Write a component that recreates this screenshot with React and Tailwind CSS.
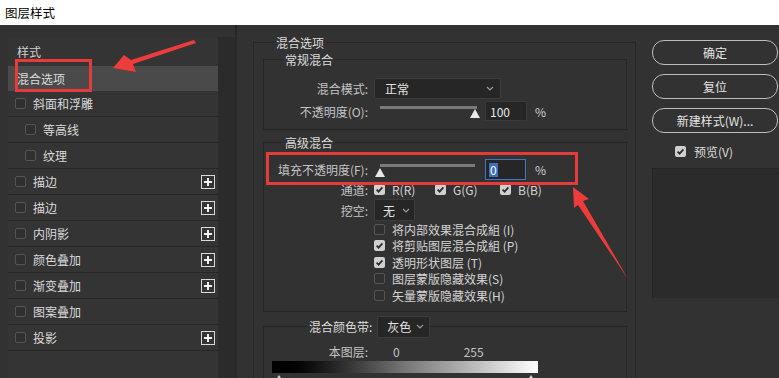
import React from "react";

const Check = ({ on }) =>
  on ? (
    <span className="flex h-[11px] w-[11px] shrink-0 items-center justify-center rounded-[2px] bg-[#d0d0d0]">
      <svg width="9" height="9" viewBox="0 0 9 9">
        <path d="M1.6 4.6l2 2 3.8-4.2" fill="none" stroke="#2e2e2e" strokeWidth="1.8" />
      </svg>
    </span>
  ) : (
    <span className="h-[11px] w-[11px] shrink-0 rounded-[2px] border border-[#545454] bg-[#303030]" />
  );

const Plus = () => (
  <span className="flex h-[14px] w-[14px] items-center justify-center border border-[#d8d8d8]">
    <svg width="10" height="10" viewBox="0 0 10 10">
      <path d="M5 1v8M1 5h8" stroke="#efefef" strokeWidth="2" />
    </svg>
  </span>
);

const Chevron = () => (
  <svg width="8" height="5" viewBox="0 0 8 5">
    <path d="M1 1l3 3 3-3" fill="none" stroke="#9a9a9a" strokeWidth="1.2" />
  </svg>
);

const layers = [
  ["斜面和浮雕", false, false],
  ["等高线", true, false],
  ["纹理", true, false],
  ["描边", false, true],
  ["描边", false, true],
  ["内阴影", false, true],
  ["颜色叠加", false, true],
  ["渐变叠加", false, true],
  ["图案叠加", false, false],
  ["投影", false, true],
];

const options = [
  ["将内部效果混合成組 (I)", false],
  ["将剪贴图层混合成組 (P)", true],
  ["透明形状图层 (T)", true],
  ["图层蒙版隐藏效果(S)", false],
  ["矢量蒙版隐藏效果(H)", false],
];

export default function App() {
  return (
    <div className="relative h-[378px] w-[779px] overflow-hidden bg-[#323232] font-['Noto_Sans_CJK_SC',sans-serif] text-[12px] leading-[17px] text-[#d4d4d4]">
      <div className="flex h-[25px] items-center bg-white pl-[5px] text-[12.5px] text-black">图层样式</div>

      <div className="flex h-[353px]">
        {/* effects list */}
        <div className="w-[237px] shrink-0 border-r-2 border-[#282828] pl-[8px] pt-[12px]">
          <div className="flex h-full">
            <div className="w-[210px] bg-[#343434]">
              <div className="flex h-[29px] items-center pl-[9px] text-[#cfcfcf]">样式</div>
              <div className="flex h-[25px] items-center bg-[#4a4a4a] pl-[9px] text-[#dcdcdc]">混合选项</div>
              {layers.map(([t, indent, plus], i) => (
                <div
                  key={i}
                  className={`flex h-[26px] items-center border-b border-[#272727] pr-[3px] ${indent ? "pl-[17px]" : "pl-[7px]"}`}
                >
                  <Check />
                  <span className="ml-[7px] flex-1 text-[#dadada]">{t}</span>
                  {plus && <Plus />}
                </div>
              ))}
            </div>
            <div className="w-[17px] bg-[#2b2b2b]" />
          </div>
        </div>

        {/* blending options */}
        <div className="w-[399px] shrink-0">
          <fieldset className="ml-[16px] mt-[9px] h-[400px] w-[383px] border border-[#262626]">
            <legend className="ml-[20px] px-[2px] text-[#dcdcdc]">混合选项</legend>

            <fieldset className="ml-[9px] w-[364px] border border-[#262626] pb-[8px]">
              <legend className="ml-[19px] px-[2px] text-[#dcdcdc]">常规混合</legend>
              <div className="mt-[10px] flex h-[21px] items-center">
                <span className="w-[104px] text-right text-[#c4c4c4]">混合模式:</span>
                <div className="ml-[6px] flex h-[21px] w-[127px] items-center justify-between rounded-[2px] border border-[#3c3c3c] bg-[#262626] pl-[10px] pr-[6px] text-[#e2e2e2]">
                  正常
                  <Chevron />
                </div>
              </div>
              <div className="mt-[2px] flex h-[20px] items-center">
                <span className="w-[104px] text-right text-[#c4c4c4]">不透明度(O):</span>
                <div className="relative ml-[6px] h-full w-[111px]">
                  <div className="absolute left-[6px] top-[5px] h-[3px] w-[97px] bg-[#7a7a7a]" />
                  <div className="absolute left-[96px] top-[8px] h-0 w-0 border-x-[5px] border-b-[9px] border-x-transparent border-b-[#e8e8e8]" />
                </div>
                <div className="flex h-[20px] w-[42px] items-center border border-[#3a3a3a] bg-[#262626] pl-[4px] text-[#e6e6e6]">100</div>
                <span className="ml-[8px] text-[#cfcfcf]">%</span>
              </div>
            </fieldset>

            <fieldset className="ml-[9px] mt-[4px] w-[364px] border border-[#262626] pb-[7px]">
              <legend className="ml-[19px] px-[2px] text-[#dcdcdc]">高级混合</legend>
              <div className="mt-[8px] flex h-[21px] items-center">
                <span className="w-[104px] text-right text-[#c4c4c4]">填充不透明度(F):</span>
                <div className="relative ml-[6px] h-full w-[111px]">
                  <div className="absolute left-[6px] top-[5px] h-[3px] w-[95px] bg-[#7a7a7a]" />
                  <div className="absolute left-[1px] top-[9px] h-0 w-0 border-x-[5px] border-b-[9px] border-x-transparent border-b-[#e8e8e8]" />
                </div>
                <div className="flex h-[21px] w-[41px] items-center border border-[#4673bd] bg-[#262626] pl-[3px]">
                  <span className="bg-[#3a6fc6] px-[1px] leading-[14px] text-white">0</span>
                </div>
                <span className="ml-[9px] text-[#cfcfcf]">%</span>
              </div>
              <div className="flex h-[19px] items-center">
                <span className="w-[104px] text-right text-[#c4c4c4]">通道:</span>
                <div className="ml-[6px] flex w-[61px] items-center">
                  <Check on />
                  <span className="ml-[7px]">R(R)</span>
                </div>
                <div className="flex w-[65px] items-center">
                  <Check on />
                  <span className="ml-[7px]">G(G)</span>
                </div>
                <div className="flex items-center">
                  <Check on />
                  <span className="ml-[7px]">B(B)</span>
                </div>
              </div>
              <div className="flex h-[22px] items-center">
                <span className="w-[104px] text-right text-[#c4c4c4]">挖空:</span>
                <div className="ml-[6px] flex h-[22px] w-[41px] items-center justify-between rounded-[2px] border border-[#3c3c3c] bg-[#262626] pl-[8px] pr-[4px] text-[#e2e2e2]">
                  无
                  <Chevron />
                </div>
              </div>
              <div className="pl-[110px]">
                {options.map(([t, on]) => (
                  <div key={t} className="flex h-[16.5px] items-center">
                    <Check on={on} />
                    <span className="ml-[7px]">{t}</span>
                  </div>
                ))}
              </div>
            </fieldset>

            <fieldset className="ml-[9px] mt-[4px] h-[100px] w-[364px] border border-[#262626]">
              <legend className="ml-[45px]">
                <div className="flex items-center">
                  <span className="text-[#dcdcdc]">混合颜色带:</span>
                  <div className="ml-[5px] flex h-[22px] w-[53px] items-center justify-between rounded-[2px] border border-[#3c3c3c] bg-[#262626] pl-[9px] pr-[5px] text-[#e2e2e2]">
                    灰色
                    <Chevron />
                  </div>
                </div>
              </legend>
              <div className="mt-[6px] flex h-[16px] items-center text-[#c4c4c4]">
                <span className="w-[104px] text-right">本图层:</span>
                <span className="ml-[25px]">0</span>
                <span className="ml-[64px]">255</span>
              </div>
              <div className="ml-[8px] mt-[1px] h-[12px] w-[266px] bg-linear-to-r from-black via-[#777] to-white" />
              <div className="ml-[8px] mt-[2px] flex w-[266px] justify-between px-[3px]">
                <div className="h-0 w-0 border-x-[4px] border-b-[6px] border-x-transparent border-b-[#d0d0d0]" />
                <div className="h-0 w-0 border-x-[4px] border-b-[6px] border-x-transparent border-b-[#d0d0d0]" />
              </div>
            </fieldset>
          </fieldset>
        </div>

        {/* buttons */}
        <div className="flex-1 pl-[16px] pt-[15px]">
          {["确定", "复位", "新建样式(W)..."].map((t, i) => (
            <div
              key={t}
              className={`flex h-[25px] w-[126px] items-center justify-center rounded-[12px] border border-[#bdbdbd] text-[#e4e4e4] ${i ? "mt-[9px]" : ""}`}
            >
              {t}
            </div>
          ))}
          <div className="mt-[11px] flex h-[14px] items-center pl-[23px]">
            <Check on />
            <span className="ml-[8px] text-[#dcdcdc]">预览(V)</span>
          </div>
          <div className="mt-[10px] h-[130px] w-[130px] border-l border-t border-[#242424] bg-[#2b2b2b]" />
        </div>
      </div>

      {/* annotations */}
      <svg className="pointer-events-none absolute left-0 top-0" width="779" height="378">
        <rect x="16.5" y="60.5" width="74" height="30" fill="none" stroke="#e53b3b" strokeWidth="3" />
        <rect x="267.5" y="153.5" width="309" height="30" fill="none" stroke="#e53b3b" strokeWidth="3" />
        <polygon points="194,40 131,60 124,55 113,68 136,72 133,64 196,43" fill="#ee3b3b" />
        <polygon points="573,187 589,199 583,201 628,279 578,205 574,208" fill="#ee3b3b" />
      </svg>
    </div>
  );
}
